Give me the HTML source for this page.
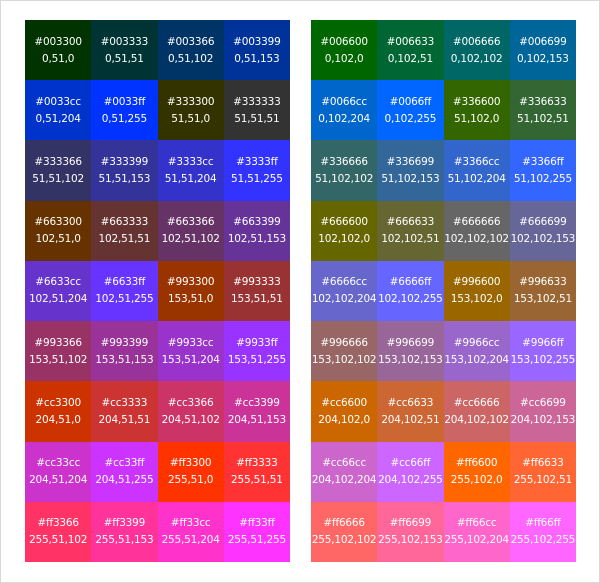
<!DOCTYPE html>
<html><head><meta charset="utf-8"><style>
html,body{margin:0;padding:0;background:#fff}
body{width:600px;height:583px;position:relative;overflow:hidden;font-family:"DejaVu Sans","Liberation Sans",sans-serif}
.frame{position:absolute;left:0;top:0;width:598px;height:581px;border:1px solid #d8d8d8}
.g{position:absolute;top:20px;width:265px;height:542px;display:grid;grid-template-columns:repeat(4,1fr);grid-template-rows:repeat(9,1fr)}
.g div{color:#fff;font-size:10.5px;line-height:17px;text-align:center;display:flex;flex-direction:column;justify-content:center;white-space:nowrap;letter-spacing:-0.2px;padding-top:1px}
#a{left:25px}#b{left:311px}
</style></head><body><div class="frame"></div>
<div class="g" id="a">
<div style="background:#003300">#003300<br>0,51,0</div>
<div style="background:#003333">#003333<br>0,51,51</div>
<div style="background:#003366">#003366<br>0,51,102</div>
<div style="background:#003399">#003399<br>0,51,153</div>
<div style="background:#0033cc">#0033cc<br>0,51,204</div>
<div style="background:#0033ff">#0033ff<br>0,51,255</div>
<div style="background:#333300">#333300<br>51,51,0</div>
<div style="background:#333333">#333333<br>51,51,51</div>
<div style="background:#333366">#333366<br>51,51,102</div>
<div style="background:#333399">#333399<br>51,51,153</div>
<div style="background:#3333cc">#3333cc<br>51,51,204</div>
<div style="background:#3333ff">#3333ff<br>51,51,255</div>
<div style="background:#663300">#663300<br>102,51,0</div>
<div style="background:#663333">#663333<br>102,51,51</div>
<div style="background:#663366">#663366<br>102,51,102</div>
<div style="background:#663399">#663399<br>102,51,153</div>
<div style="background:#6633cc">#6633cc<br>102,51,204</div>
<div style="background:#6633ff">#6633ff<br>102,51,255</div>
<div style="background:#993300">#993300<br>153,51,0</div>
<div style="background:#993333">#993333<br>153,51,51</div>
<div style="background:#993366">#993366<br>153,51,102</div>
<div style="background:#993399">#993399<br>153,51,153</div>
<div style="background:#9933cc">#9933cc<br>153,51,204</div>
<div style="background:#9933ff">#9933ff<br>153,51,255</div>
<div style="background:#cc3300">#cc3300<br>204,51,0</div>
<div style="background:#cc3333">#cc3333<br>204,51,51</div>
<div style="background:#cc3366">#cc3366<br>204,51,102</div>
<div style="background:#cc3399">#cc3399<br>204,51,153</div>
<div style="background:#cc33cc">#cc33cc<br>204,51,204</div>
<div style="background:#cc33ff">#cc33ff<br>204,51,255</div>
<div style="background:#ff3300">#ff3300<br>255,51,0</div>
<div style="background:#ff3333">#ff3333<br>255,51,51</div>
<div style="background:#ff3366">#ff3366<br>255,51,102</div>
<div style="background:#ff3399">#ff3399<br>255,51,153</div>
<div style="background:#ff33cc">#ff33cc<br>255,51,204</div>
<div style="background:#ff33ff">#ff33ff<br>255,51,255</div>
</div>
<div class="g" id="b">
<div style="background:#006600">#006600<br>0,102,0</div>
<div style="background:#006633">#006633<br>0,102,51</div>
<div style="background:#006666">#006666<br>0,102,102</div>
<div style="background:#006699">#006699<br>0,102,153</div>
<div style="background:#0066cc">#0066cc<br>0,102,204</div>
<div style="background:#0066ff">#0066ff<br>0,102,255</div>
<div style="background:#336600">#336600<br>51,102,0</div>
<div style="background:#336633">#336633<br>51,102,51</div>
<div style="background:#336666">#336666<br>51,102,102</div>
<div style="background:#336699">#336699<br>51,102,153</div>
<div style="background:#3366cc">#3366cc<br>51,102,204</div>
<div style="background:#3366ff">#3366ff<br>51,102,255</div>
<div style="background:#666600">#666600<br>102,102,0</div>
<div style="background:#666633">#666633<br>102,102,51</div>
<div style="background:#666666">#666666<br>102,102,102</div>
<div style="background:#666699">#666699<br>102,102,153</div>
<div style="background:#6666cc">#6666cc<br>102,102,204</div>
<div style="background:#6666ff">#6666ff<br>102,102,255</div>
<div style="background:#996600">#996600<br>153,102,0</div>
<div style="background:#996633">#996633<br>153,102,51</div>
<div style="background:#996666">#996666<br>153,102,102</div>
<div style="background:#996699">#996699<br>153,102,153</div>
<div style="background:#9966cc">#9966cc<br>153,102,204</div>
<div style="background:#9966ff">#9966ff<br>153,102,255</div>
<div style="background:#cc6600">#cc6600<br>204,102,0</div>
<div style="background:#cc6633">#cc6633<br>204,102,51</div>
<div style="background:#cc6666">#cc6666<br>204,102,102</div>
<div style="background:#cc6699">#cc6699<br>204,102,153</div>
<div style="background:#cc66cc">#cc66cc<br>204,102,204</div>
<div style="background:#cc66ff">#cc66ff<br>204,102,255</div>
<div style="background:#ff6600">#ff6600<br>255,102,0</div>
<div style="background:#ff6633">#ff6633<br>255,102,51</div>
<div style="background:#ff6666">#ff6666<br>255,102,102</div>
<div style="background:#ff6699">#ff6699<br>255,102,153</div>
<div style="background:#ff66cc">#ff66cc<br>255,102,204</div>
<div style="background:#ff66ff">#ff66ff<br>255,102,255</div>
</div>
</body></html>
